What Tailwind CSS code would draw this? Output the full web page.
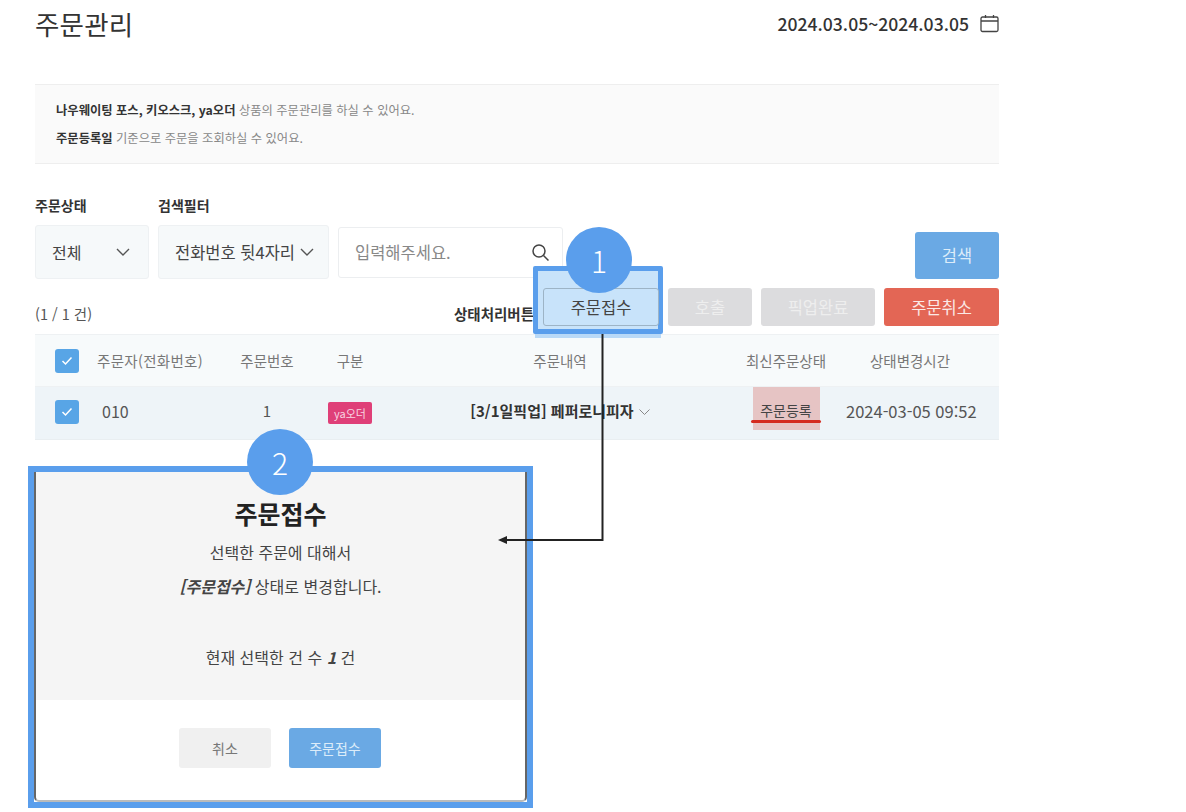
<!DOCTYPE html>
<html lang="ko">
<head>
  <meta charset="UTF-8" />
  <meta name="viewport" content="width=device-width, initial-scale=1.0"/>
  <title>주문관리</title>
  <script src="https://cdn.jsdelivr.net/npm/@tailwindcss/browser@4"></script>
</head>
<body class="bg-white text-[#333] font-['Noto_Sans_CJK_KR','Noto_Sans',sans-serif]">
  <div class="relative w-[1186px] h-[812px] overflow-hidden pl-[35px]">
    <div class="w-[964px]">

      <!-- Title -->
      <div class="flex items-center justify-between h-[48px]">
        <h1 class="text-[26.500px] leading-[48px] tracking-[0.2px] text-[#333]">주문관리</h1>
        <div class="flex items-center gap-[11px] text-[#333]">
          <span class="text-[17.600px] font-medium">2024.03.05~2024.03.05</span>
          <svg class="w-[19px] h-[19px]" viewBox="0 0 19 19" fill="none" stroke="#444" stroke-width="1.3">
            <rect x="1" y="3" width="17" height="14.5" rx="1.5"/>
            <path d="M1 7h17M5.500 1v3M13.500 1v3"/>
          </svg>
        </div>
      </div>

      <!-- Info -->
      <div class="mt-[36px] h-[80px] bg-[#fafafa] border-y border-[#eeeeee] pl-[21px] pt-[11px] text-[12.300px] leading-[28px] text-[#888]">
        <p><b class="text-[#333]">나우웨이팅 포스, 키오스크, ya오더</b> 상품의 주문관리를 하실 수 있어요.</p>
        <p><b class="text-[#333]">주문등록일</b> 기준으로 주문을 조회하실 수 있어요.</p>
      </div>

      <!-- Filters -->
      <div class="mt-[31px] flex text-[14px] font-bold leading-[20px] text-[#333]">
        <span class="w-[123px]">주문상태</span>
        <span>검색필터</span>
      </div>
      <div class="mt-[10px] flex h-[54px]">
        <div class="w-[114px] h-[54px] flex items-center justify-between pl-[16px] pr-[18px] bg-[#f6f9fa] border border-[#eef1f3] rounded-[3px] text-[16px] text-[#444]">
          전체
          <svg class="w-[14px] h-[8px]" viewBox="0 0 14 8" fill="none" stroke="#555" stroke-width="1.4"><path d="M1 1l6 6 6-6"/></svg>
        </div>
        <div class="ml-[9px] w-[171px] h-[54px] flex items-center justify-between pl-[16px] pr-[14px] bg-[#f6f9fa] border border-[#eef1f3] rounded-[3px] text-[16.500px] text-[#444]">
          <span class="whitespace-nowrap">전화번호 뒷4자리</span>
          <svg class="w-[14px] h-[8px]" viewBox="0 0 14 8" fill="none" stroke="#555" stroke-width="1.4"><path d="M1 1l6 6 6-6"/></svg>
        </div>
        <div class="ml-[9px] mt-[2px] w-[225px] h-[51px] flex items-center justify-between pl-[16px] pr-[12px] bg-white border border-[#eceef0] rounded-[3px] text-[16.500px] text-[#888]">
          입력해주세요.
          <svg class="w-[19px] h-[19px]" viewBox="0 0 19 19" fill="none" stroke="#444" stroke-width="1.5"><circle cx="8" cy="8" r="6"/><path d="M12.500 12.500l5 5"/></svg>
        </div>
        <button class="ml-auto mt-[7px] w-[84px] h-[47px] bg-[#6aa9e4] rounded-[3px] text-[16.500px] text-[#dcecf9]">검색</button>
      </div>

      <!-- Actions -->
      <div class="mt-[9px] flex items-center h-[38px]">
        <span class="mt-[14px] self-center text-[14.500px] text-[#555]">(1 / 1 건)</span>
        <span class="ml-auto mt-[14px] mr-[9px] text-[14.500px] font-bold text-[#333]">상태처리버튼</span>
        <div class="relative w-[116px] h-[38px]">
          <div class="absolute left-[-10px] top-[-22px] w-[130px] h-[68px] bg-[#c8e3fa] border-[5px] border-[#5a9eec] rounded-[2px] shadow-[0_6px_0_-2px_#b9d9f7]"></div>
          <button class="relative w-[116px] h-[38px] border border-[#9db4c6] rounded-[3px] text-[16.500px] text-[#444]">주문접수</button>
        </div>
        <button class="ml-[9px] w-[84px] h-[38px] bg-[#dcdcde] rounded-[3px] text-[16.500px] text-[#eeeeee]">호출</button>
        <button class="ml-[9px] w-[114px] h-[38px] bg-[#dcdcde] rounded-[3px] text-[16.500px] text-[#eeeeee]">픽업완료</button>
        <button class="ml-[9px] w-[115px] h-[38px] bg-[#e36655] rounded-[3px] text-[16.500px] text-[#fbe9e6]">주문취소</button>
      </div>

      <!-- Table -->
      <div class="mt-[8px] text-[14.500px] text-[#777]">
        <div class="flex items-center h-[53px] bg-[#f7fafb] border-y border-[#eef1f3]">
          <span class="w-[55px] pl-[20px]">
            <span class="flex items-center justify-center w-[24px] h-[24px] bg-[#58a5e6] rounded-[3px]">
              <svg class="w-[12px] h-[10px]" viewBox="0 0 12 10" fill="none" stroke="#fff" stroke-width="1.5"><path d="M1.500 5l3 3 6-6.500"/></svg>
            </span>
          </span>
          <span class="w-[120px] text-center whitespace-nowrap tracking-[0.3px]">주문자(전화번호)</span>
          <span class="ml-[17px] w-[80px] text-center">주문번호</span>
          <span class="ml-[3px] w-[80px] text-center">구분</span>
          <span class="ml-[10px] w-[320px] text-center">주문내역</span>
          <span class="ml-[6px] w-[120px] text-center">최신주문상태</span>
          <span class="w-[128px] text-center">상태변경시간</span>
        </div>
        <div class="flex items-center h-[53px] bg-[#eef4f8] border-b border-[#e9eef1]">
          <span class="w-[55px] pl-[20px] mb-[2px]">
            <span class="flex items-center justify-center w-[24px] h-[24px] bg-[#58a5e6] rounded-[3px]">
              <svg class="w-[12px] h-[10px]" viewBox="0 0 12 10" fill="none" stroke="#fff" stroke-width="1.5"><path d="M1.500 5l3 3 6-6.500"/></svg>
            </span>
          </span>
          <span class="w-[120px] pl-[12px] mb-[4px] text-[16px] text-[#555]">010</span>
          <span class="ml-[17px] w-[80px] mb-[4px] text-center text-[15px] text-[#555]">1</span>
          <span class="ml-[3px] w-[80px] mb-[1px] flex justify-center">
            <span class="w-[44px] h-[22px] bg-[#df3f78] rounded-[2px] text-[11px] leading-[22px] text-center text-[#f8d5e2]">ya오더</span>
          </span>
          <span class="ml-[10px] w-[320px] mb-[4px] flex items-center justify-center gap-[5px] text-[15px] font-bold text-[#333]">
            [3/1일픽업] 페퍼로니피자
            <svg class="w-[11px] h-[6px] mt-[2px]" viewBox="0 0 11 6" fill="none" stroke="#888"><path d="M.5.5l5 5 5-5"/></svg>
          </span>
          <span class="ml-[6px] w-[120px] h-[53px] relative flex justify-center">
            <span class="w-[67px] h-[43px] bg-[#e6c4c4] text-[14px] leading-[47px] text-center text-[#444]">주문등록</span>
            <span class="absolute left-[25px] top-[33px] w-[70px] h-[3px] bg-[#d42b20] rounded-full"></span>
          </span>
          <span class="w-[128px] mb-[4px] text-center text-[16.500px] text-[#555] whitespace-nowrap">2024-03-05 09:52</span>
        </div>
      </div>

      <!-- Modal -->
      <div class="mt-[26px] ml-[-7px] w-[505px] h-[342px] border-[6px] border-[#5a9eec] bg-white">
        <div class="h-full border-x-2 border-b-2 border-x-[#666] border-b-[#bbb] rounded-b-[5px] flex flex-col">
          <div class="h-[228px] bg-[#f5f5f5] flex flex-col items-center text-[16px] text-[#444]">
            <h2 class="mt-[21px] text-[25px] leading-[40px] font-bold text-[#222]">주문접수</h2>
            <p class="mt-[2px] leading-[34px]">선택한 주문에 대해서</p>
            <p class="leading-[34px]"><b class="italic">[주문접수]</b> 상태로 변경합니다.</p>
            <p class="mt-[37px] leading-[34px]">현재 선택한 건 수 <b class="italic">1</b> 건</p>
          </div>
          <div class="mt-[28px] pr-[1px] flex justify-center gap-[18px]">
            <button class="w-[92px] h-[40px] bg-[#f0f0f0] rounded-[3px] text-[14px] text-[#777]">취소</button>
            <button class="w-[92px] h-[40px] bg-[#6aa9e4] rounded-[3px] text-[14px] text-[#dcecf9]">주문접수</button>
          </div>
        </div>
      </div>
    </div>

    <!-- Annotations -->
    <svg class="absolute left-0 top-0 pointer-events-none" width="1186" height="812" fill="none">
      <path d="M602.500 334V540H506" stroke="#222" stroke-width="2"/>
      <path d="M498 540l9-4v8z" fill="#222"/>
    </svg>
    <div class="absolute left-[566px] top-[227px] w-[66px] h-[66px] rounded-full bg-[#5a9eec] text-white text-[30px] font-light leading-[66px] text-center">1</div>
    <div class="absolute left-[247px] top-[429px] w-[66px] h-[66px] rounded-full bg-[#5a9eec] text-white text-[30px] font-light leading-[66px] text-center">2</div>
  </div>
</body>
</html>
